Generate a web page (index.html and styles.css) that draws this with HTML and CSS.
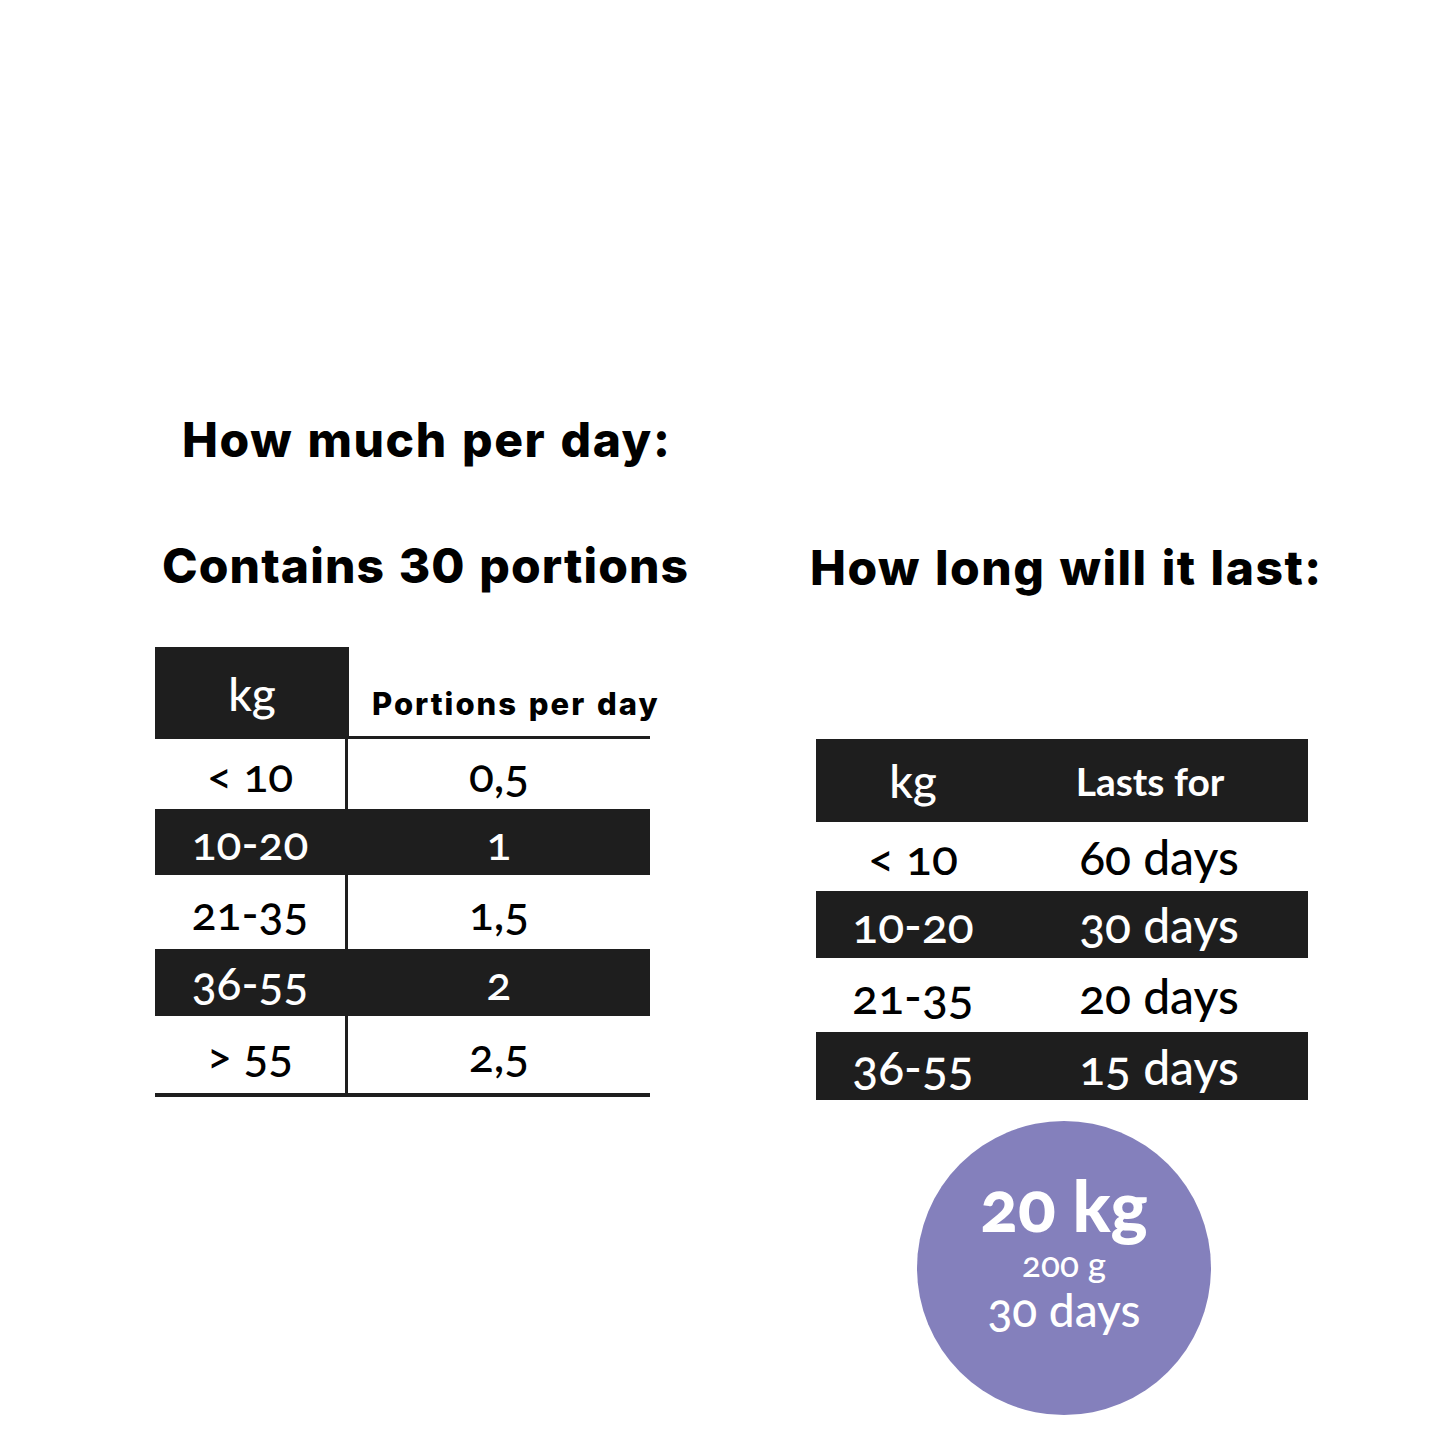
FILE: index.html
```html
<!DOCTYPE html>
<html>
<head>
<meta charset="utf-8">
<link rel="stylesheet" href="styles.css">
</head>
<body>
<div class="page">
  <div class="col-left">
    <h1 class="title title-main">How much per day:</h1>
    <h2 class="title title-sub">Contains 30 portions</h2>
    <div class="ptable">
      <div class="prow prow-head">
        <div class="pc1 head-kg">kg</div>
        <div class="pc2 head-portions">Portions per day</div>
      </div>
      <div class="prow r1"><div class="pc1">&lt; 10</div><div class="pc2">0,5</div></div>
      <div class="prow r2 dark"><div class="pc1">10-20</div><div class="pc2">1</div></div>
      <div class="prow r3"><div class="pc1">21-35</div><div class="pc2">1,5</div></div>
      <div class="prow r4 dark"><div class="pc1">36-55</div><div class="pc2">2</div></div>
      <div class="prow r5"><div class="pc1">&gt; 55</div><div class="pc2">2,5</div></div>
    </div>
  </div>
  <div class="col-right">
    <h2 class="title title-last">How long will it last:</h2>
    <div class="ltable">
      <div class="lrow lhead dark"><div class="lc1">kg</div><div class="lc2 lasts">Lasts for</div></div>
      <div class="lrow l1"><div class="lc1">&lt; 10</div><div class="lc2">60 days</div></div>
      <div class="lrow l2 dark"><div class="lc1">10-20</div><div class="lc2">30 days</div></div>
      <div class="lrow l3"><div class="lc1">21-35</div><div class="lc2">20 days</div></div>
      <div class="lrow l4 dark"><div class="lc1">36-55</div><div class="lc2">15 days</div></div>
    </div>
    <div class="badge">
      <div class="badge-kg">20 kg</div>
      <div class="badge-g">200 g</div>
      <div class="badge-days">30 days</div>
    </div>
  </div>
</div>
</body>
</html>
```

FILE: styles.css
```css
html, body {
  margin: 0;
  padding: 0;
  background: #ffffff;
}

.page {
  display: flex;
  padding-top: 410px;
  padding-left: 155px;
  color: #000;
}

.title {
  font-family: Inter, "Liberation Sans", sans-serif;
  font-weight: 800;
  margin: 0;
  line-height: 1;
  white-space: nowrap;
  letter-spacing: 1.6px;
  word-spacing: 2px;
}

.title-main {
  font-size: 48px;
  margin-left: 27px;
  height: 60px;
  line-height: 60px;
}

.title-sub {
  font-size: 48px;
  margin-left: 7px;
  margin-top: 66px;
  height: 60px;
  line-height: 60px;
  letter-spacing: 1.1px;
}

.col-left {
  width: 495px;
  flex-shrink: 0;
  display: flex;
  flex-direction: column;
}

.ptable {
  margin-top: 51px;
  width: 495px;
  font-family: Lato, "Noto Sans", sans-serif;
  font-weight: 500;
  font-variant-numeric: oldstyle-nums;
  border-bottom: 4px solid #1e1e1e;
}

.prow {
  display: flex;
  font-size: 46px;
}

.pc1 {
  width: 190px;
  flex-shrink: 0;
  border-right: 3px solid #1e1e1e;
  display: flex;
  align-items: center;
  justify-content: center;
}

.pc2 {
  flex: 1;
  min-width: 0;
  display: flex;
  align-items: center;
  justify-content: center;
}

.prow-head { height: 92px; }
.prow-head .pc1 {
  width: 194px;
  border-right: none;
  background: #1e1e1e;
  color: #fff;
  font-size: 46px;
}
.prow-head .pc2 {
  align-self: stretch;
  border-bottom: 3px solid #1e1e1e;
  box-sizing: border-box;
  align-items: flex-end;
  justify-content: flex-start;
  padding-bottom: 14px;
  padding-left: 23px;
  font-family: Inter, "Liberation Sans", sans-serif;
  font-weight: 800;
  font-size: 31px;
  letter-spacing: 2px;
  word-spacing: 2px;
  white-space: nowrap;
}

.r1 { height: 70px; }
.r2 { height: 66px; }
.r3 { height: 74px; }
.r4 { height: 67px; }
.r5 { height: 77px; }

.dark {
  background: #1e1e1e;
  color: #fff;
}

.col-right {
  margin-left: 166px;
  display: flex;
  flex-direction: column;
}

.title-last {
  font-size: 48px;
  margin-top: 128px;
  margin-left: -6px;
  height: 60px;
  line-height: 60px;
  letter-spacing: 1.5px;
}

.ltable {
  margin-top: 141px;
  width: 492px;
  font-family: Lato, "Noto Sans", sans-serif;
  font-weight: 500;
  font-variant-numeric: oldstyle-nums;
}

.lrow {
  display: flex;
  font-size: 48px;
}

.lc1 {
  width: 194px;
  flex-shrink: 0;
  display: flex;
  align-items: center;
  justify-content: center;
}

.lc2 {
  flex: 1;
  display: flex;
  align-items: center;
  justify-content: center;
}

.lhead { height: 83px; font-size: 46px; }
.lasts { font-size: 39px; font-weight: 700; padding-right: 18px; }
.l1 { height: 69px; }
.l2 { height: 67px; }
.l3 { height: 74px; }
.l4 { height: 68px; }

.badge {
  margin-top: 21px;
  margin-left: 101px;
  width: 294px;
  height: 294px;
  border-radius: 50%;
  background: #8480bc;
  color: #fff;
  font-family: Lato, "Noto Sans", sans-serif;
  font-variant-numeric: oldstyle-nums;
  display: flex;
  flex-direction: column;
  align-items: center;
  justify-content: flex-start;
  padding-top: 52px;
  box-sizing: border-box;
}

.badge-kg {
  font-size: 70px;
  font-weight: 900;
  line-height: 64px;
  height: 64px;
}

.badge-g {
  font-size: 35px;
  font-weight: 500;
  line-height: 44px;
  height: 44px;
  margin-top: 4px;
}

.badge-days {
  font-size: 46px;
  font-weight: 500;
  line-height: 54px;
  height: 54px;
  margin-top: -2px;
}
```
